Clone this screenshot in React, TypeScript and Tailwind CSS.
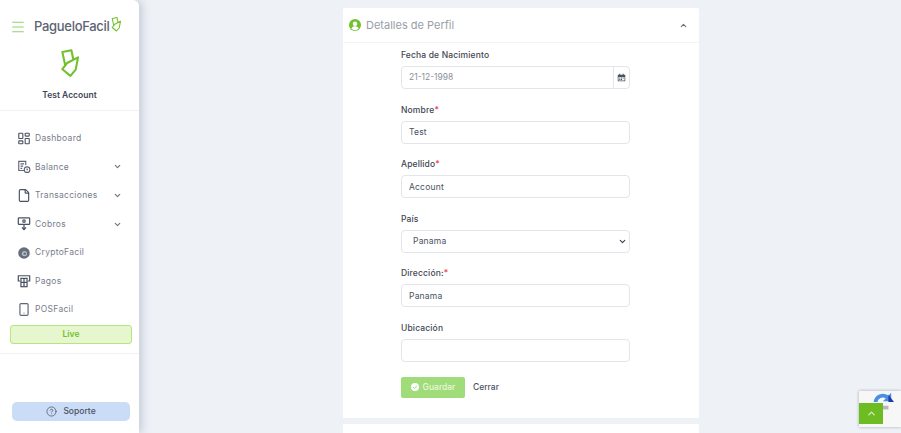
import type { ReactNode } from 'react'
import { ChevronDown, ChevronUp, CircleHelp, File, LayoutDashboard, Menu, Smartphone } from 'lucide-react'

const font = { fontFamily: 'Inter, "Open Sans", sans-serif' }

function LeafLogo({ className }: { className: string }) {
  return (
    <svg viewBox="0 0 20 30" fill="none" stroke="#72c02c" strokeWidth="2.2" strokeLinejoin="round" strokeLinecap="round" className={className}>
      <path d="M5.500 17 2.500 3 12 1 14 10.500" />
      <path d="M7.500 14.500 19 8.500 16.500 21.500 11 28 2.500 21 5.500 17Z" />
    </svg>
  )
}

function BalanceIcon() {
  return (
    <svg viewBox="0 0 16 16" fill="none" stroke="#5f6675" strokeWidth="1.3" className="w-[14px] h-[14px]">
      <path d="M9 12H2V1.5h8V6" />
      <path d="M4 4.5h4M4 7h3M4 9.5h2" />
      <circle cx="11.5" cy="11" r="3.2" />
      <path d="M11.5 9.8V11h1" />
    </svg>
  )
}

function CobrosIcon() {
  return (
    <svg viewBox="0 0 16 16" fill="none" stroke="#4b5261" strokeWidth="1.4" className="w-[14px] h-[14px]">
      <rect x="1.5" y="1" width="13" height="7.5" rx="0.8" />
      <circle cx="8" cy="4.7" r="1.4" />
      <path d="M8 9v5M5.8 12 8 14.5 10.2 12" />
    </svg>
  )
}

function CryptoIcon() {
  return (
    <svg viewBox="0 0 16 16" className="w-[14px] h-[14px]">
      <circle cx="8" cy="8" r="6.6" fill="#666d7b" />
      <circle cx="8.5" cy="8.8" r="3" fill="#b9bdc6" />
      <path d="M7.5 7.5h1.6a1.2 1.2 0 0 1 0 2.6H7.5Z" fill="#666d7b" />
    </svg>
  )
}

function PagosIcon() {
  return (
    <svg viewBox="0 0 16 16" fill="none" stroke="#4b5261" strokeWidth="1.4" className="w-[14px] h-[14px]">
      <path d="M3.5 8H1.5V2h13v6h-2" />
      <rect x="4.5" y="5" width="7" height="9.5" />
      <path d="M4.5 9.5h7M8 5v9.5" />
    </svg>
  )
}

const navItems: { label: string; icon: ReactNode; caret?: boolean }[] = [
  { label: 'Dashboard', icon: <LayoutDashboard size={15} strokeWidth={1.9} className="text-[#4b5261]" /> },
  { label: 'Balance', icon: <BalanceIcon />, caret: true },
  { label: 'Transacciones', icon: <File size={15} strokeWidth={2} className="text-[#4b5261]" />, caret: true },
  { label: 'Cobros', icon: <CobrosIcon />, caret: true },
  { label: 'CryptoFacil', icon: <CryptoIcon /> },
  { label: 'Pagos', icon: <PagosIcon /> },
  { label: 'POSFacil', icon: <Smartphone size={15} strokeWidth={2} className="text-[#5f6675]" /> },
]

function Sidebar() {
  return (
    <aside className="w-[139px] h-[433px] shrink-0 bg-white rounded-tr-md shadow-[3px_0_8px_rgba(120,130,150,0.35)] flex flex-col">
      <div className="flex items-center pl-[10px] pt-[11px] h-[42px]">
        <Menu size={16} strokeWidth={1.6} className="text-[#8fd36a]" />
        <span className="ml-[8px] text-[13px] leading-none font-medium tracking-[-0.3px] text-[#5d6472]">PagueloFacil</span>
        <LeafLogo className="ml-[1px] w-[10px] h-[17px] -mt-[4px]" />
      </div>
      <div className="flex justify-center pt-[7px]">
        <LeafLogo className="w-[19px] h-[29px]" />
      </div>
      <p className="mt-[11px] text-center text-[8.5px] leading-[12px] font-semibold text-[#3f4654]">Test Account</p>
      <div className="mt-[9px] border-t border-[#f0f1f4]" />
      <nav className="pt-[13px]">
        {navItems.map(item => (
          <div key={item.label} className="h-[28.6px] flex items-center pl-[17px] pr-[17px]">
            <span className="w-[14px] flex justify-center">{item.icon}</span>
            <span className="ml-[4px] text-[8.5px] tracking-[0.3px] text-[#777d8a] flex-1">{item.label}</span>
            {item.caret && <ChevronDown size={9} strokeWidth={3} className="text-[#6b7280]" />}
          </div>
        ))}
      </nav>
      <div className="ml-[10px] mr-[7px] mt-[1px] h-[19px] rounded-[3px] bg-[#e6f7cf] border border-[#b5e67f] flex items-center justify-center text-[8.5px] font-semibold text-[#72c02c]">
        Live
      </div>
      <div className="mt-[9px] border-t border-[#f0f1f4]" />
      <div className="mt-auto mb-[12px] ml-[12px] mr-[9px] h-[19px] rounded-[5px] bg-[#cbdcf6] flex items-center justify-center gap-[6px] text-[8.5px] font-medium text-[#4b5261]">
        <CircleHelp size={11} strokeWidth={1.6} />
        Soporte
      </div>
    </aside>
  )
}

function Field({ label, required, children }: { label: string; required?: boolean; children: ReactNode }) {
  return (
    <div className="h-[54.6px]">
      <label className="block h-[11px] mb-[5px] text-[8.5px] leading-[11px] font-medium tracking-[0.15px] text-[#3f4654]">
        {label}
        {required && <span className="text-[#ef4444]">*</span>}
      </label>
      {children}
    </div>
  )
}

const inputClass = 'block w-full h-[23px] px-[7px] bg-white border border-[#e2e5ea] rounded-[4px] text-[8.5px] tracking-[0.2px] text-[#4b5261] outline-none'

function ProfileCard() {
  return (
    <section className="w-[356px] h-[410px] bg-white mt-[8px] rounded-t-[2px]">
      <div className="h-[35px] pl-[6px] pr-[11px] flex items-center border-b border-[#f3f4f6]">
        <svg viewBox="0 0 16 16" className="w-[12px] h-[12px]">
          <circle cx="8" cy="8" r="8" fill="#72c02c" />
          <circle cx="8" cy="6.4" r="3" fill="#fff" />
          <path d="M3 12.8a5.4 5.4 0 0 1 10 0 6.6 6.6 0 0 1-10 0Z" fill="#fff" />
        </svg>
        <h2 className="ml-[5px] text-[11px] text-[#9a9ea8] flex-1">Detalles de Perfil</h2>
        <ChevronUp size={9} strokeWidth={3} className="text-[#6b7280]" />
      </div>
      <form className="w-[229px] ml-[58px] pt-[7px]">
        <Field label="Fecha de Nacimiento">
          <div className="flex h-[23px] border border-[#e2e5ea] rounded-[4px]">
            <input readOnly value="21-12-1998" className="flex-1 min-w-0 px-[7px] text-[8.5px] text-[#8b909b] outline-none bg-transparent" />
            <span className="w-[16px] border-l border-[#e2e5ea] flex items-center justify-center">
              <svg viewBox="0 0 12 12" className="w-[9px] h-[9px]" fill="#4b5261">
                <path d="M1 2.2h10V11H1Zm1 3V10h8V5.200Z" fillRule="evenodd" />
                <path d="M3 1h1.400v2H3zM7.600 1H9v2H7.600zM3 6h1.500v1.200H3zM5.300 6h1.500v1.200H5.300zM7.500 6H9v1.200H7.500zM3 8h1.500v1.200H3zM5.300 8h1.500v1.200H5.300z" />
              </svg>
            </span>
          </div>
        </Field>
        <Field label="Nombre" required>
          <input readOnly value="Test" className={inputClass} />
        </Field>
        <Field label="Apellido" required>
          <input readOnly value="Account" className={inputClass} />
        </Field>
        <Field label="País">
          <div className={`${inputClass} flex items-center justify-between !pl-[11px] !pr-[2px]`}>
            <span>Panama</span>
            <ChevronDown size={9} strokeWidth={3} className="text-[#374151]" />
          </div>
        </Field>
        <Field label="Dirección:" required>
          <input readOnly value="Panama" className={inputClass} />
        </Field>
        <Field label="Ubicación">
          <input readOnly className={inputClass} />
        </Field>
        <div className="flex items-center -mt-[1px]">
          <button type="button" className="w-[64px] h-[21px] rounded-[2px] bg-[#a0dc7a] flex items-center justify-center gap-[4px] text-[8.5px] font-medium text-[#e9f7de]">
            <svg viewBox="0 0 12 12" className="w-[8px] h-[8px]">
              <circle cx="6" cy="6" r="6" fill="#fff" />
              <path d="M3.200 6.200 5.200 8.200 8.800 4.300" fill="none" stroke="#a0dc7a" strokeWidth="1.500" />
            </svg>
            Guardar
          </button>
          <span className="ml-[8px] text-[8.5px] font-medium text-[#4b5261]">Cerrar</span>
        </div>
      </form>
    </section>
  )
}

export default function App() {
  return (
    <div style={font} className="relative flex w-[901px] h-[433px] overflow-hidden bg-[#eef2f7]">
      <Sidebar />
      <main className="flex-1 pl-[204px]">
        <ProfileCard />
        <div className="w-[356px] h-[20px] mt-[6px] bg-white" />
      </main>
      {/* recaptcha badge + scroll top button */}
      <div className="absolute left-[859px] top-[391px] w-[42px] h-[36px] bg-[#f7f7f7] shadow-[0_0_3px_rgba(0,0,0,0.3)] flex justify-center">
        <svg viewBox="0 0 30 26" className="w-[28px] h-[24px] ml-[4px]">
          <path d="M6 12a10 10 0 0 1 16-7l3-3v9h-9l3-3a6 6 0 0 0-9 4Z" fill="#4a90e2" />
          <path d="M22 4l6 8h-6Z" fill="#1c3aa9" />
          <path d="M8 16h14v4H8Z" fill="#b8b8b8" />
        </svg>
      </div>
      <button className="absolute left-[859px] top-[403px] w-[24px] h-[21px] bg-[#6cbc22] flex items-center justify-center">
        <ChevronUp size={11} strokeWidth={2.5} className="text-[#d9f2c4]" />
      </button>
    </div>
  )
}
